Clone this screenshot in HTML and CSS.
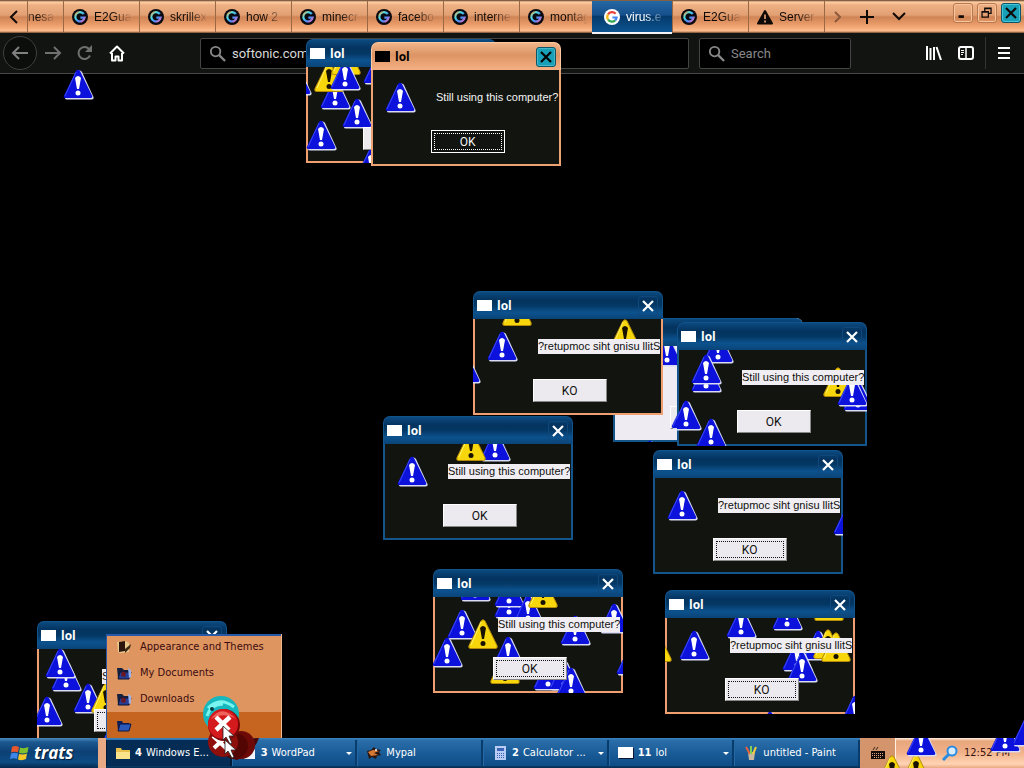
FILE: index.html
```html
<!DOCTYPE html>
<html lang="en">
<head>
<meta charset="utf-8">
<title>virus.exe - Mypal</title>
<link rel="stylesheet" href="styles.css">
</head>
<body>
<svg class="defs" aria-hidden="true">
  <linearGradient id="rainbow" x1="0" y1="0" x2="1" y2="1"><stop offset="0" stop-color="#ffa04a"/><stop offset=".3" stop-color="#4ae0e0"/><stop offset=".65" stop-color="#4a8af8"/><stop offset="1" stop-color="#f070c0"/></linearGradient>
  <symbol id="blue" viewBox="0 0 31 31" overflow="visible">
    <path d="M16 1.500 Q18 1 19 3L30.500 28Q31 30.500 28.500 30.500H4Q2 30.500 2 29Z" fill="#d9dcf4"/>
    <path d="M13 2Q15-.5 17 2L29 26.500Q30 29 27.500 29H2.500Q0 29 1 26.500Z" fill="#0c12dc"/>
    <path d="M13 3L2 27" stroke="#3c4cf4" fill="none"/>
    <path d="M12 9Q15 5 18 9L16 20H14Z" fill="#fff"/><circle cx="15" cy="24" r="2.500" fill="#fff"/>
  </symbol>
  <symbol id="yellow" viewBox="0 0 31 31" overflow="visible">
    <path d="M13 2Q15-.5 17 2L29 26.500Q30 29.500 27.500 29.500H2.500Q0 29.500 1 26.500Z" fill="#f7d70c" stroke="#b58a08"/>
    <path d="M13 3L3 26" stroke="#fff36a" fill="none"/>
    <path d="M12 9Q15 5 18 9L16 20H14Z" fill="#1a1200"/><circle cx="15" cy="24.500" r="2.500" fill="#1a1200"/>
  </symbol>
  <symbol id="g" viewBox="0 0 16 16"><circle cx="8" cy="8" r="8" fill="#0b0a10"/><path d="M11.800 5A4.700 4.700 0 1 0 12.600 8.600H8.400" fill="none" stroke="url(#rainbow)" stroke-width="2.200"/></symbol>
  <symbol id="g-white" viewBox="0 0 16 16"><circle cx="8" cy="8" r="8" fill="#fff"/><g fill="none" stroke-width="2.200"><path d="M4 5.500A4.700 4.700 0 0 1 11.600 4.800" stroke="#e8453c"/><path d="M4 5.500A4.700 4.700 0 0 0 4.100 10.600" stroke="#f5b912"/><path d="M4.100 10.600A4.700 4.700 0 0 0 11.200 11.400" stroke="#34a853"/><path d="M11.200 11.400A4.700 4.700 0 0 0 12.600 8.500H8.400" stroke="#4285f4"/></g></symbol>
  <symbol id="x" viewBox="0 0 18 18"><path d="M4 4L14 14M14 4L4 14" stroke="currentColor" stroke-width="2.200" fill="none"/></symbol>
  <symbol id="lens" viewBox="0 0 18 18"><circle cx="7" cy="7" r="5" fill="none" stroke="currentColor" stroke-width="2"/><path d="M10.500 10.500L17 17" stroke="currentColor" stroke-width="2.400"/></symbol>
  <symbol id="docs" viewBox="0 0 16 14"><path d="M1 2h5l2 2h5v8H2z" fill="#15203f"/><path d="M4 6h11l-2 7H2z" fill="#263f96" stroke="#0b1334"/><path d="M6 5l4 2-1 4-4-1z" fill="#6b1620"/><path d="M12 2l3 2v7l-2 1z" fill="#9eb4e8"/></symbol>
</svg>

<header class="browser">
  <div class="tabstrip">
    <button class="scroll" aria-label="Scroll tabs left"><svg width="9" height="14" viewBox="0 0 9 14"><path d="M8 1L2 7l6 6" fill="none" stroke="currentColor" stroke-width="2"/></svg></button>
    <button class="tab partial"><span>nesa</span></button>
    <button class="tab"><svg class="fav"><use href="#g"/></svg><span>E2Gua</span></button>
    <button class="tab"><svg class="fav"><use href="#g"/></svg><span>skrillex</span></button>
    <button class="tab"><svg class="fav"><use href="#g"/></svg><span>how 2</span></button>
    <button class="tab"><svg class="fav"><use href="#g"/></svg><span>minecr</span></button>
    <button class="tab"><svg class="fav"><use href="#g"/></svg><span>facebo</span></button>
    <button class="tab"><svg class="fav"><use href="#g"/></svg><span>internet</span></button>
    <button class="tab"><svg class="fav"><use href="#g"/></svg><span>montag</span></button>
    <button class="tab active"><svg class="fav"><use href="#g-white"/></svg><span>virus.e</span></button>
    <button class="tab"><svg class="fav"><use href="#g"/></svg><span>E2Gua</span></button>
    <button class="tab"><svg class="fav" viewBox="0 0 16 16"><path d="M8 2L15 14.500H1Z" stroke="#100a06" stroke-width="2" stroke-linejoin="round" fill="#100a06"/><path d="M8 5.500v4.500M8 11.500v2" stroke="#f0a878" stroke-width="1.600"/></svg><span>Server</span></button>
    <div class="strip-tools">
      <button class="faded" aria-label="Scroll tabs right"><svg width="8" height="12" viewBox="0 0 8 12"><path d="M1 1l5 5-5 5" fill="none" stroke="currentColor" stroke-width="2"/></svg></button>
      <button aria-label="New tab"><svg width="14" height="14" viewBox="0 0 14 14"><path d="M7 0v14M0 7h14" stroke="currentColor" stroke-width="2"/></svg></button>
      <button aria-label="List tabs"><svg width="14" height="9" viewBox="0 0 14 9"><path d="M1 1l6 6 6-6" fill="none" stroke="currentColor" stroke-width="2"/></svg></button>
    </div>
    <div class="controls">
      <button aria-label="Minimize"><svg viewBox="0 0 20 20"><path d="M5 14h6" stroke="currentColor" stroke-width="3"/></svg></button>
      <button aria-label="Restore"><svg viewBox="0 0 20 20"><path d="M4.500 8.500h7v6h-7zM4 9h8M7.500 8V4.500h7v6H12M7 5h8" fill="none" stroke="currentColor" stroke-width="1.400"/></svg></button>
      <button class="close" aria-label="Close"><svg><use href="#x"/></svg></button>
    </div>
  </div>
  <div class="toolbar">
    <button class="back" aria-label="Back"><svg width="18" height="16" viewBox="0 0 18 16"><path d="M17 8H2M8 2L2 8l6 6" fill="none" stroke="currentColor" stroke-width="2"/></svg></button>
    <button class="dim" aria-label="Forward"><svg width="18" height="16" viewBox="0 0 18 16"><path d="M1 8h15M10 2l6 6-6 6" fill="none" stroke="currentColor" stroke-width="2"/></svg></button>
    <button class="dim" aria-label="Reload"><svg width="16" height="16" viewBox="0 0 16 16"><path d="M13 10.500A6 6 0 1 1 12 4" fill="none" stroke="currentColor" stroke-width="2"/><path d="M15 0v7H8z" fill="currentColor"/></svg></button>
    <button aria-label="Home"><svg width="16" height="17" viewBox="0 0 16 17"><path d="M1 8.500L8 1.500l7 7M3 8v7.500h3.500v-4h3v4H13V8" fill="none" stroke="currentColor" stroke-width="2" stroke-linejoin="round"/></svg></button>
    <label class="field address"><svg><use href="#lens"/></svg><input type="text" value="softonic.com" aria-label="Address"></label>
    <label class="field search"><svg><use href="#lens"/></svg><input type="search" placeholder="Search" aria-label="Search"></label>
    <div class="tools">
      <button aria-label="Library"><svg width="16" height="14" viewBox="0 0 16 14"><path d="M1 0v14M4.500 2v12M8 1v13M10.500 1l4.500 13" stroke="currentColor" stroke-width="2"/></svg></button>
      <button aria-label="Sidebar"><svg width="16" height="14" viewBox="0 0 16 14"><rect x="1" y="1" width="14" height="12" rx="2" fill="none" stroke="currentColor" stroke-width="2"/><path d="M8 1v12" stroke="currentColor" stroke-width="1.500"/><path d="M3 4.500h3M3 6.500h3M3 8.500h2" stroke="currentColor"/></svg></button>
      <button class="menu-button" aria-label="Menu"><svg width="12" height="12" viewBox="0 0 12 12"><path d="M0 1h12M0 6h12M0 11h12" stroke="currentColor" stroke-width="2"/></svg></button>
    </div>
  </div>
</header>

<main class="page"></main>

<svg class="stray stray-left"><use href="#blue" width="31" height="31"/></svg>

<section class="win warm-edge win-a">
  <header><i></i><h2>lol</h2></header>
  <div class="body"><svg class="mark"><use href="#blue"/></svg><button aria-label="OK"></button></div>
  <svg class="scatter"><use href="#blue" x="-25" y="-2" width="31" height="31"/><use href="#yellow" x="8" y="-5" width="31" height="31"/><use href="#yellow" x="25" y="-22" width="31" height="31"/><use href="#blue" x="24" y="-7" width="31" height="31"/><use href="#blue" x="57" y="-13" width="31" height="31"/><use href="#blue" x="36" y="31" width="31" height="31"/><use href="#blue" x="0" y="53" width="31" height="31"/><use href="#blue" x="50" y="81" width="31" height="31"/></svg>
</section>
<section class="win warm win-b">
  <header><i></i><h2>lol</h2><button aria-label="Close"><svg><use href="#x"/></svg></button></header>
  <div class="body"><svg class="mark"><use href="#blue"/></svg><p>Still using this computer?</p><button class="focus">OK</button></div>
</section>

<section class="win light win-d">
  <header></header>
  <div class="body"><svg class="mark"><use href="#blue"/></svg><button aria-label="OK"></button></div>
  <svg class="scatter over"><use href="#blue" x="39" y="-10" width="31" height="31"/><use href="#blue" x="22" y="94" width="31" height="31"/><use href="#blue" x="58" y="53" width="31" height="31"/></svg>
</section>
<section class="win win-e">
  <header><i></i><h2>lol</h2><button aria-label="Close"><svg><use href="#x"/></svg></button></header>
  <div class="body"><svg class="mark"><use href="#blue"/></svg><p>Still using this computer?</p><button>OK</button></div>
  <svg class="scatter"><use href="#blue" x="26" y="-17" width="31" height="31"/><use href="#blue" x="14" y="4" width="31" height="31"/><use href="#blue" x="-6" y="50" width="31" height="31"/><use href="#blue" x="19" y="68" width="31" height="31"/><use href="#yellow" x="146" y="17" width="31" height="31"/><use href="#blue" x="166" y="31" width="31" height="31"/><use href="#blue" x="160" y="26" width="31" height="31"/></svg>
</section>
<section class="win win-f">
  <header><i></i><h2>lol</h2><button aria-label="Close"><svg><use href="#x"/></svg></button></header>
  <div class="body"><svg class="mark"><use href="#blue"/></svg><p>Still using this computer?</p><button>OK</button></div>
  <svg class="scatter"><use href="#blue" x="97" y="-13" width="31" height="31"/><use href="#yellow" x="73" y="-13" width="31" height="31"/></svg>
</section>
<section class="win warm-edge win-c">
  <header><i></i><h2>lol</h2><button aria-label="Close"><svg><use href="#x"/></svg></button></header>
  <div class="body"><svg class="mark"><use href="#blue"/></svg><p>?retupmoc siht gnisu llitS</p><button>KO</button></div>
  <svg class="scatter"><use href="#yellow" x="29" y="-23" width="31" height="31"/><use href="#yellow" x="137" y="0" width="31" height="31"/><use href="#blue" x="-23" y="34" width="31" height="31"/></svg>
</section>
<section class="win win-g">
  <header><i></i><h2>lol</h2><button aria-label="Close"><svg><use href="#x"/></svg></button></header>
  <div class="body"><svg class="mark"><use href="#blue"/></svg><p>?retupmoc siht gnisu llitS</p><button class="focus">KO</button></div>
  <svg class="scatter"><use href="#blue" x="180" y="27" width="31" height="31"/></svg>
</section>
<section class="win warm-edge win-h">
  <header><i></i><h2>lol</h2><button aria-label="Close"><svg><use href="#x"/></svg></button></header>
  <div class="body"><svg class="mark"><use href="#blue"/></svg><p>Still using this computer?</p><button class="focus">OK</button></div>
  <svg class="scatter"><use href="#blue" x="27" y="-26" width="31" height="31"/><use href="#blue" x="61" y="-9" width="31" height="31"/><use href="#blue" x="61" y="-20" width="31" height="31"/><use href="#blue" x="80" y="-3" width="31" height="31"/><use href="#yellow" x="95" y="-19" width="31" height="31"/><use href="#yellow" x="35" y="22" width="31" height="31"/><use href="#blue" x="-1" y="40" width="31" height="31"/><use href="#yellow" x="57" y="57" width="31" height="31"/><use href="#blue" x="60" y="39" width="31" height="31"/><use href="#blue" x="127" y="18" width="31" height="31"/><use href="#blue" x="166" y="6" width="31" height="31"/><use href="#blue" x="183" y="48" width="31" height="31"/><use href="#blue" x="100" y="63" width="31" height="31"/><use href="#blue" x="116" y="63" width="31" height="31"/><use href="#blue" x="123" y="70" width="31" height="31"/></svg>
</section>
<section class="win warm-edge win-i">
  <header><i></i><h2>lol</h2><button aria-label="Close"><svg><use href="#x"/></svg></button></header>
  <div class="body"><svg class="mark"><use href="#blue"/></svg><p>?retupmoc siht gnisu llitS</p><button class="focus">KO</button></div>
  <svg class="scatter"><use href="#blue" x="61" y="-10" width="31" height="31"/><use href="#blue" x="107" y="-18" width="31" height="31"/><use href="#yellow" x="149" y="-27" width="31" height="31"/><use href="#yellow" x="-23" y="14" width="31" height="31"/><use href="#blue" x="138" y="12" width="31" height="31"/><use href="#yellow" x="148" y="11" width="31" height="31"/><use href="#yellow" x="156" y="14" width="31" height="31"/><use href="#blue" x="117" y="23" width="31" height="31"/><use href="#blue" x="122" y="34" width="31" height="31"/><use href="#blue" x="90" y="93" width="31" height="31"/><use href="#blue" x="175" y="77" width="31" height="31"/></svg>
</section>
<section class="win warm-edge win-j">
  <header><i></i><h2>lol</h2><button aria-label="Close"><svg><use href="#x"/></svg></button></header>
  <div class="body"><svg class="mark"><use href="#blue"/></svg><p>S</p><button class="focus" aria-label="OK"></button></div>
  <svg class="scatter"><use href="#blue" x="8" y="-1" width="31" height="31"/><use href="#blue" x="36" y="34" width="31" height="31"/><use href="#yellow" x="54" y="34" width="31" height="31"/><use href="#blue" x="-5" y="47" width="31" height="31"/><use href="#blue" x="60" y="75" width="31" height="31"/></svg>
</section>

<footer class="taskbar">
  <button class="start"><svg width="20" height="20" viewBox="0 0 20 20"><path d="M2 4Q5 2 9 4L8 9.500Q5 8 1 9.500Z" fill="#e8562c"/><path d="M10 4.500Q14 6 18.500 4L17.500 9.500Q13 11 9 10Z" fill="#7fc12e"/><path d="M1 10.500Q5 9 8 10.500L7 16Q4 14.500 0 16Z" fill="#3d86e8"/><path d="M9 11Q13 12 17 10.500L16 16Q12 18 8 16.500Z" fill="#f8c827"/></svg>trats</button>
  <nav class="tasks">
    <div class="group">
      <ul class="popup">
        <li><button><svg viewBox="0 0 16 14"><path d="M1 2l8-1 4 2v9l-8 1-3-1z" fill="#e9c98a"/><path d="M3 2l6-1v10l-6 1z" fill="#2b150c"/><path d="M9 9l6-5-1 4-5 5z" fill="#3d2c18"/></svg>Appearance and Themes</button></li>
        <li><button><svg><use href="#docs"/></svg>My Documents</button></li>
        <li><button><svg><use href="#docs"/></svg>Downloads</button></li>
        <li class="hot"><button aria-label="Folder"><svg viewBox="0 0 16 14"><path d="M1 3h5l1 2h6v7H2z" fill="#0d1d58"/><path d="M4 6h11l-2 7H2z" fill="#2c58b8" stroke="#0b1748"/></svg></button></li>
      </ul>
      <button class="task pressed"><svg viewBox="0 0 16 14"><path d="M1 2h5l1 2h8v9H1z" fill="#e9c04c"/><path d="M1 6h14v7H1z" fill="#fbe38b"/></svg><b>4</b><span>Windows E...</span></button>
    </div>
    <div class="group"><button class="task more"><svg viewBox="0 0 16 14"><path d="M4 3h10v10H3z" fill="#f4f6fb"/><path d="M5 10l8-7" stroke="#375fb2" stroke-width="2"/></svg><b>3</b><span>WordPad</span></button></div>
    <div class="group"><button class="task"><svg viewBox="0 0 16 14"><path d="M1 5l4-1 3-3 2 2 5 1-2 2 2 3-4 1-1 3-4-2-3 2-1-4z" fill="#2a1712"/><path d="M2 6l5-2 6 1-5 2 4 2-7 1z" fill="#d77934"/><circle cx="10" cy="4" r="1" fill="#fff"/></svg><span>Mypal</span></button></div>
    <div class="group"><button class="task more"><svg viewBox="0 0 16 14"><rect x="3" width="11" height="14" fill="#b9cdf4"/><path d="M5 2h7v3H5z" fill="#3c65b8"/><path d="M5 7.500h7M5 9.500h7M5 11.500h7" stroke="#375fb2" stroke-dasharray="1 1"/></svg><b>2</b><span>Calculator ...</span></button></div>
    <div class="group"><button class="task more"><svg viewBox="0 0 16 14"><path d="M1 2h15v11H1z" fill="#0b1733"/><path d="M0 1h15v11H0z" fill="#fff"/></svg><b>11</b><span>lol</span></button></div>
    <div class="group"><button class="task"><svg viewBox="0 0 16 14"><path d="M5 6h7l-1 8H6z" fill="#c8b8a0"/><path d="M3 1l4 7" stroke="#e8623c" stroke-width="2"/><path d="M8 0v8" stroke="#7bd05c" stroke-width="2"/><path d="M13 1l-3 7" stroke="#f2c83c" stroke-width="2"/></svg><span>untitled - Paint</span></button></div>
  </nav>
  <div class="tray">
    <div class="lang"><svg width="14" height="12" viewBox="0 0 14 12"><path d="M2 3l2-3m1 3l2-3" stroke="#3a2a20" fill="none"/><path d="M0 4h14v8H0z" fill="#140c08"/><path d="M1 6.500h12M1 8.500h12M3 10.500h8" stroke="#e0a682" stroke-dasharray="1 1"/></svg></div>
    <svg class="find" width="16" height="16" viewBox="0 0 16 16"><circle cx="10" cy="6" r="4.500" fill="#d8ecfa" stroke="#2b8be0" stroke-width="2"/><path d="M6.500 9.500L1 15" stroke="#2b8be0" stroke-width="3"/></svg>
    <time>12:52 PM</time>
    <svg class="tray-scatter"><use href="#yellow" x="17" y="17" width="31" height="31"/><use href="#yellow" x="41" y="16" width="31" height="31"/><use href="#blue" x="46" y="-12" width="31" height="31"/><use href="#blue" x="130" y="-16" width="31" height="31"/></svg>
  </div>
</footer>

<svg class="stray stray-right"><use href="#blue" width="31" height="31"/></svg>
<svg class="pointer" viewBox="0 0 60 70" aria-hidden="true">
  <path d="M12 46Q16 62 34 66Q50 60 56 44Z" fill="#4a0504"/><circle cx="38" cy="51" r="14" fill="#6d0a08"/><circle cx="32" cy="52" r="13" fill="#530504"/><circle cx="20" cy="48" r="15" fill="#8e0f0c"/>
  <path d="M10 42l14 13M24 42L11 54" stroke="#fff" stroke-width="4"/>
  <circle cx="18" cy="20" r="18" fill="#16b8be"/><path d="M5 14Q17 2 31 13M4 22Q8 10 20 10" stroke="#7af4ee" stroke-width="3" fill="none"/><circle cx="9" cy="15" r="2" fill="#043b42"/>
  <circle cx="21" cy="31" r="16" fill="#7d0707"/><circle cx="20" cy="30" r="15" fill="#d51a1e"/><path d="M8 25Q18 10 32 24Q20 18 8 25" fill="#f0625c"/>
  <path d="M13 23l13 13M27 23L13 36" stroke="#fff" stroke-width="4.500"/>
  <path d="M20 32v14l3-3 4 7 2-1-3-7h5zM22 46v14l3-3 4 7 2-1-3-7h5z" fill="#fff" stroke="#222" stroke-width=".8"/>
</svg>
</body>
</html>
```
FILE: styles.css
```css
* { box-sizing: border-box; }
body {
  margin: 0;
  min-height: 100vh;
  position: relative;
  overflow: hidden;
  display: flex;
  flex-direction: column;
  background: #000;
  font-family: "Liberation Sans", sans-serif;
  font-size: 11px;
}
button { border: 0; padding: 0; background: none; color: inherit; font: inherit; }
svg { display: block; flex: none; }
.defs { position: absolute; width: 0; height: 0; }
.page { flex: 1; }

/* Browser chrome */
.tabstrip {
  display: flex;
  height: 33px;
  padding-top: 1px;
  color: #100a06;
  background: linear-gradient(#5c3a24 0, #ffd0a4 2px, #eeb083 5px, #e2a073 15px, #cf8456 17px, #e89a67 24px, #ffbc8c 31px, #6a4630 33px);
}
.scroll { width: 27px; padding-left: 9px; }
.tab {
  display: flex;
  align-items: center;
  gap: 6px;
  flex: 0 1 76px;
  min-width: 0;
  padding: 0 5px 0 8px;
  border-left: 1px solid #9a6844;
  font-size: 12px;
}
.tab span { overflow: hidden; white-space: nowrap; text-align: left; flex: 1; mask-image: linear-gradient(90deg, #000 45%, transparent 95%); }
.tab.partial { flex-basis: 36px; padding: 0 8px 0 0; }
.tab.partial span { mask-image: linear-gradient(90deg, #0008, #000 30%, transparent); }
.tab.active {
  flex-basis: 80px;
  color: #fff;
  border: 0;
  border-bottom: 2px solid #f4f4f8;
  margin: 0 0 -1px -3px;
  padding-left: 12px;
  background: linear-gradient(#2468a4, #16508c 45%, #043a6c 50%, #0c5490);
  position: relative;
}
.fav { width: 16px; height: 16px; }
.strip-tools { display: flex; flex: 1; border-left: 1px solid #9a6844; }
.strip-tools button { width: 32px; height: 31px; display: grid; place-items: center; }
.strip-tools button:first-child { width: 26px; }
.strip-tools .faded { color: #8c5a3c; }
.controls { display: flex; gap: 4px; padding: 2px 3px 0 0; }
.controls button { width: 20px; height: 20px; border: 1px solid #b87850; border-radius: 3px; box-shadow: inset 0 0 0 1px #f8c49c; }
.controls svg { width: 18px; height: 18px; }
.controls .close { background: #18a0b8; border-color: #0c5468; box-shadow: inset 0 0 0 1px #48c4d4; }

.toolbar {
  display: flex;
  align-items: center;
  height: 41px;
  padding: 0 3px;
  color: #fff;
  background: #111411;
  border-bottom: 1px solid #484848;
}
.toolbar button { width: 32px; height: 32px; display: grid; place-items: center; }
.toolbar .dim { color: #707070; }
.toolbar .back { width: 34px; height: 34px; border: 1px solid #404040; border-radius: 50%; color: #808080; background: #0c0e0c; }
.field {
  display: flex;
  align-items: center;
  gap: 6px;
  height: 31px;
  padding: 0 8px;
  border: 1px solid #444;
  border-radius: 2px;
  background: #000;
  color: #888;
}
.field svg { width: 17px; height: 17px; }
.field input { flex: 1; min-width: 0; border: 0; padding: 0; background: none; color: #d8d8d8; font: 13px Roboto, sans-serif; outline: 0; }
.field input::placeholder { color: #888; }
.address { flex: 1; margin-left: 67px; }
.search { width: 152px; margin-left: 10px; }
.tools { display: flex; margin-left: 67px; }
.tools .menu-button { width: 36px; margin-left: 3px; border-left: 1px solid #333; }

/* Message windows, placed freely on the desktop */
.win {
  position: absolute;
  isolation: isolate;
  width: 190px;
  border-radius: 7px 7px 0 0;
  background: #121410;
  --edge: #14568c;
}
.win header {
  display: flex;
  align-items: center;
  height: 28px;
  padding: 0 4px 0 3px;
  border: 1px solid #10548e;
  border-bottom: 0;
  border-radius: 7px 7px 0 0;
  color: #fff;
  background: linear-gradient(#0c4a80, #04335f 30%, #043864 50%, #0c528e 75%, #0a4478);
}
.win header i { width: 15px; height: 11px; background: #fff; }
.win h2 { flex: 1; margin: 0 0 0 5px; font: bold 12px/16px "Open Sans", sans-serif; }
.win header button { width: 20px; height: 20px; border: 1px solid #10487c; border-radius: 3px; }
.win header svg { width: 18px; height: 18px; }
.win .body {
  display: grid;
  grid-template-columns: 31px 1fr;
  column-gap: 20px;
  align-items: start;
  align-content: start;
  height: 96px;
  padding: 12px 6px 0 12px;
  border: 2px solid var(--edge);
  border-top: 0;
}
.mark { width: 31px; height: 31px; }
.win p {
  position: relative;
  z-index: 2;
  grid-column: 2;
  justify-self: start;
  margin: 8px 0 0;
  background: #f0eef2;
  color: #101010;
  font: 11px/15px "Liberation Sans", sans-serif;
  white-space: nowrap;
}
.win .body button {
  position: relative;
  z-index: 2;
  grid-column: 1 / -1;
  justify-self: center;
  width: 74px;
  height: 23px;
  margin: 17px 8px 0 0;
  background: #eceaee;
  color: #101010;
  border: 1px solid #fff;
  border-right-color: #888;
  border-bottom-color: #888;
  font: 12px/16px Roboto, sans-serif;
}
.win .focus { outline: 1px dotted #111; outline-offset: -4px; }
.scatter { position: absolute; left: 0; top: 28px; width: 100%; height: 96px; overflow: hidden; z-index: 1; }
.scatter.over { z-index: 3; }
.warm-edge { --edge: #f0a070; }
.light { background: #eeebf2; }
.warm { --edge: #eca374; }
.warm header { color: #000; border-color: #ffc8a0; background: linear-gradient(#f0b488, #dc9464 45%, #e49c6c 60%, #f4b084); }
.warm header i { background: #000; }
.warm header button { background: #18a0b8; border-color: #0c5468; box-shadow: inset 0 0 0 1px #48b8c8; }
.warm p { background: none; color: #f4f4f4; }
.warm .body button { background: #111310; color: #f4f4f4; border-color: #fff; }
.warm .focus { outline-color: #fff; }
.win-a { left: 306px; top: 39px; }
.win-b { left: 371px; top: 42px; }
.win-c { left: 473px; top: 291px; }
.win-d { left: 613px; top: 318px; }
.win-e { left: 677px; top: 322px; }
.win-f { left: 383px; top: 416px; }
.win-g { left: 653px; top: 450px; }
.win-h { left: 433px; top: 569px; }
.win-i { left: 665px; top: 590px; }
.win-j { left: 37px; top: 621px; }

.stray { position: absolute; width: 31px; height: 31px; z-index: 4; }
.stray-left { left: 63px; top: 69px; }
.stray-right { right: -19px; bottom: 21px; }
.pointer { position: absolute; left: 203px; bottom: 4px; width: 60px; height: 70px; z-index: 5; }

/* Taskbar */
.taskbar {
  position: relative;
  z-index: 3;
  display: flex;
  height: 30px;
  color: #fff;
  font: 11px/14px "DejaVu Sans Condensed", "DejaVu Sans", sans-serif;
  background: linear-gradient(#3c84c0 0, #2468a4 3px, #14568f 16px, #0c4a80 26px, #062c50 30px);
}
.start {
  display: flex;
  align-items: center;
  gap: 4px;
  width: 98px;
  padding-left: 10px;
  border-radius: 0 8px 8px 0;
  font: italic bold 17px/20px "Open Sans", sans-serif;
  text-shadow: 1px 1px 1px #021c38;
  background: linear-gradient(#4c8cc0 0, #1c5890 4px, #0c4074 14px, #0c4c84 24px, #04284c 30px);
}
.tasks { display: flex; flex: 1; min-width: 0; border-left: 8px solid #e8aa84; }
.group { position: relative; flex: 0 1 126px; min-width: 0; }
.task {
  display: flex;
  align-items: center;
  gap: 4px;
  width: 100%;
  height: 26px;
  margin-top: 2px;
  padding: 0 8px;
  text-align: left;
  border-left: 1px solid #2468a4;
  border-right: 2px solid #083c6c;
  background: linear-gradient(#2a6eaa, #1a5c98 50%, #0e4c86);
}
.task svg { width: 16px; height: 14px; }
.task span { white-space: nowrap; flex: 1; }
.pressed { background: #042c54; border-color: #021c38; }
.more::after { content: ""; border: 3px solid transparent; border-top-color: #fff; border-bottom: 0; margin-right: -5px; }
.popup {
  position: absolute;
  left: 0;
  bottom: 30px;
  width: 176px;
  margin: 0;
  padding: 0;
  list-style: none;
  color: #3a0c10;
  background: #df9560;
  box-shadow: inset 0 2px #2858a8;
  border-left: 1px solid #2858a8;
  border-right: 1px solid #f0b890;
}
.popup button { display: flex; align-items: center; gap: 8px; width: 100%; height: 26px; padding-left: 9px; }
.popup svg { width: 16px; height: 14px; }
.popup .hot { background: #c5651f; }
.tray {
  position: relative;
  display: flex;
  align-items: center;
  width: 164px;
  color: #3a1410;
  background: linear-gradient(#fff0e0 0, #e8a67c 3px, #f0b088 14px, #ffd4b4 26px, #e8a880 30px);
}
.lang { display: grid; place-items: center; width: 36px; height: 30px; border-right: 1px solid #fff0e0; background: #d4946c; }
.find { margin: 0 6px 0 46px; }
.tray-scatter { position: absolute; left: 0; top: 0; width: 100%; height: 100%; overflow: hidden; }
```
